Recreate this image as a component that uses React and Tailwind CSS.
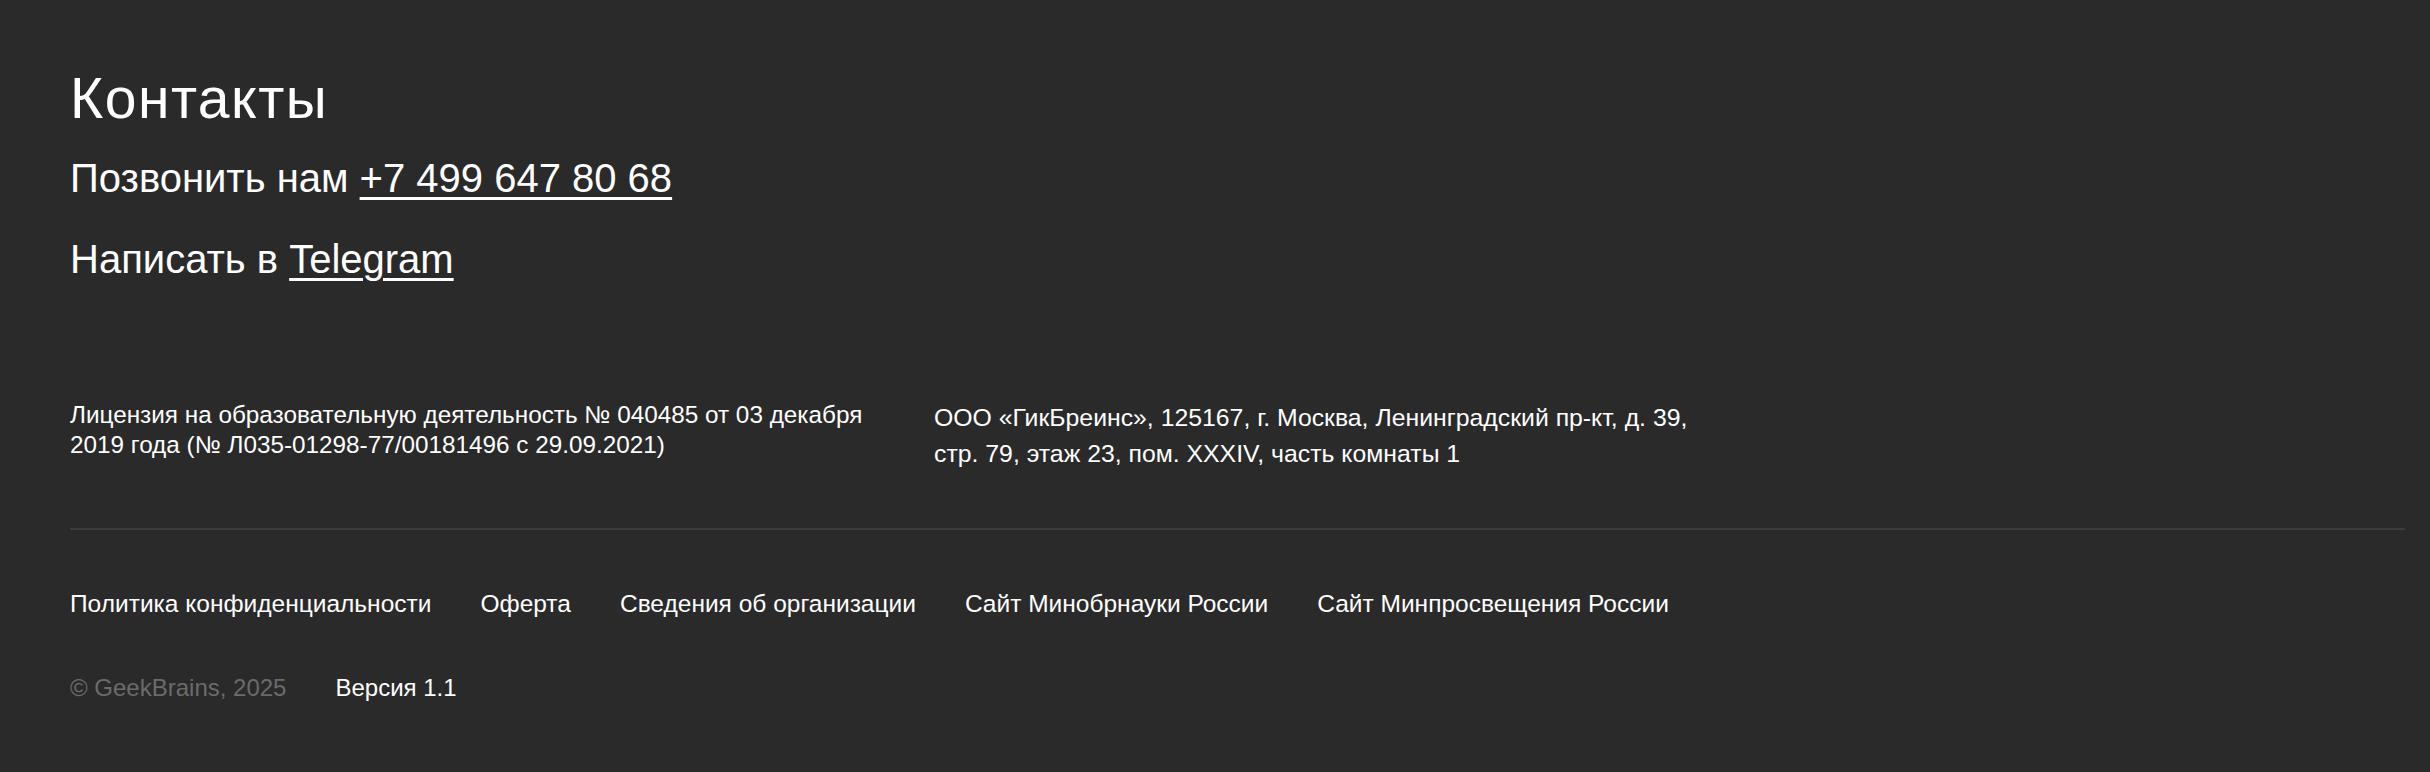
export default function App() {
  const links = [
    'Политика конфиденциальности',
    'Оферта',
    'Сведения об организации',
    'Сайт Минобрнауки России',
    'Сайт Минпросвещения России',
  ]

  return (
    <div
      className="min-h-[772px] bg-[#2a2a2a] text-white pl-[70px] pr-[25px] pt-[72px] pb-[68px]"
      style={{ fontFamily: '"Liberation Sans", Arial, sans-serif' }}
    >
      {/* Contacts */}
      <h2 className="text-[57px] leading-[52px] tracking-[1.5px] font-normal">Контакты</h2>
      <p className="mt-[30px] text-[40px] leading-[48px]">
        Позвонить нам <a href="#" className="underline underline-offset-[5px] decoration-[3px]">+7 499 647 80 68</a>
      </p>
      <p className="mt-[33px] text-[40px] leading-[48px]">
        Написать в <a href="#" className="underline underline-offset-[5px] decoration-[3px]">Telegram</a>
      </p>

      {/* Legal */}
      <div className="mt-[117px] flex">
        <p className="w-[810px] text-[24.3px] leading-[30px]">
          Лицензия на образовательную деятельность № 040485 от 03 декабря 2019 года (№ Л035-01298-77/00181496 с 29.09.2021)
        </p>
        <p className="ml-[54px] w-[780px] text-[24.8px] leading-[36px]">
          ООО «ГикБреинс», 125167, г. Москва, Ленинградский пр-кт, д. 39, стр. 79, этаж 23, пом. XXXIV, часть комнаты 1
        </p>
      </div>

      <div className="mt-[56px] h-[2px] bg-[#3c3c3c]" />

      {/* Links */}
      <nav className="mt-[58px] flex gap-[49px] text-[24.5px] leading-[32px]">
        {links.map(l => (
          <a key={l} href="#" className="hover:underline">{l}</a>
        ))}
      </nav>

      <div className="mt-[52px] flex gap-[49px] text-[24px] leading-[32px]">
        <span className="text-[#6b6b6b]">© GeekBrains, 2025</span>
        <span>Версия 1.1</span>
      </div>
    </div>
  )
}
